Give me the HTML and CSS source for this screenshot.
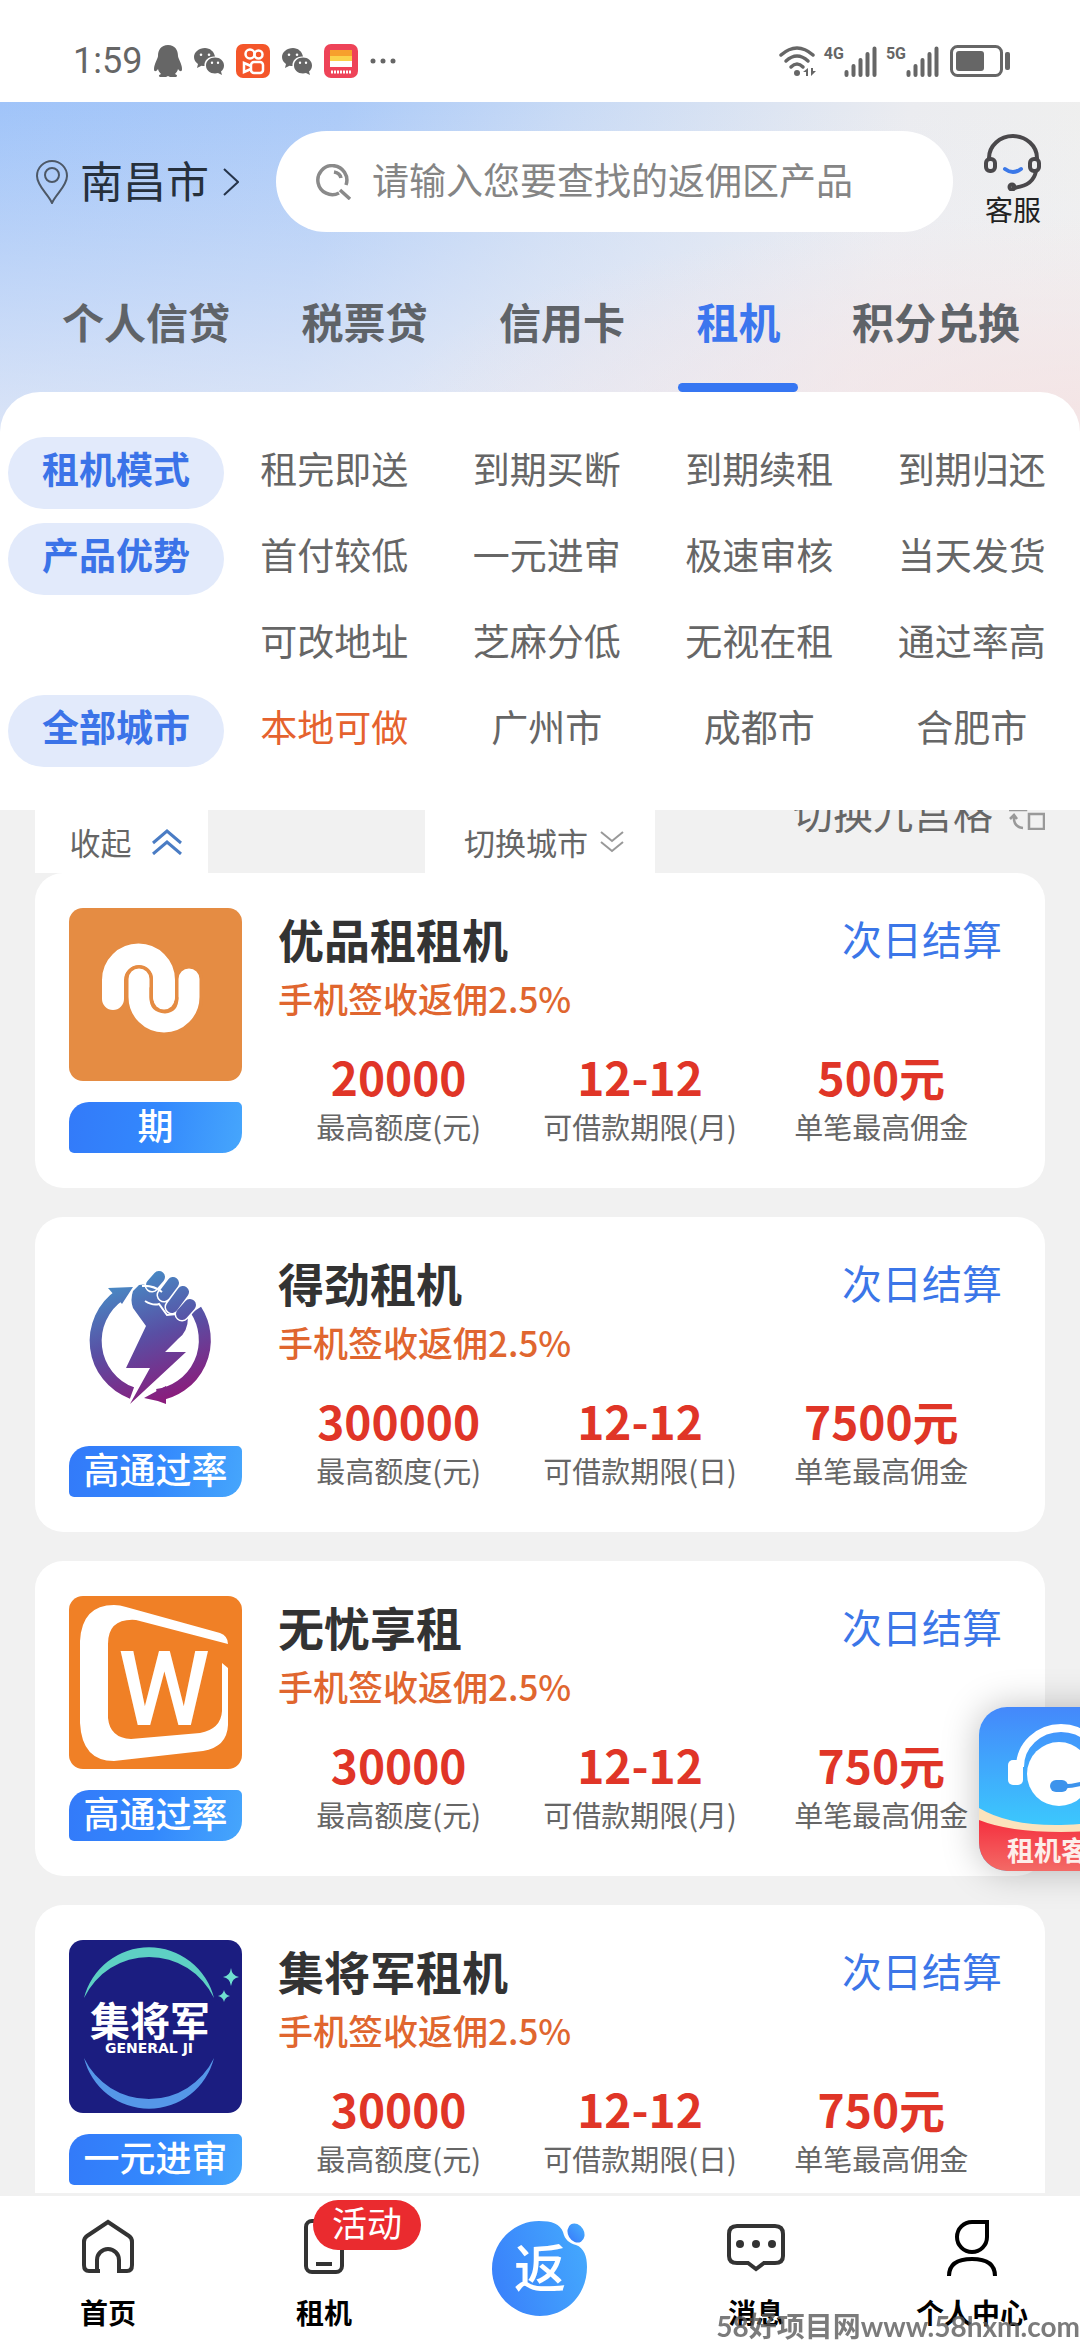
FILE: index.html
```html
<!DOCTYPE html>
<html lang="zh-CN">
<head>
    <meta charset="UTF-8">
    <meta name="viewport" content="width=device-width, initial-scale=1.0">
    <link rel="stylesheet" href="styles.css">
    <title>租机</title>
</head>
<body>

    <!-- shared symbols -->
    <svg class="defs" width="0" height="0" aria-hidden="true">
        <symbol id="wechat" viewBox="0 0 30 27">
            <path fill="#666" fill-rule="evenodd" d="M11 0C5 0 0 4 0 9c0 3 1.500 5.300 4 7l-1 4 4.500-2.300c1 .2 2 .3 3 .3C10 12 15 8 21 8.500 20 3.500 16 0 11 0zM7 5.500a1.300 1.300 0 1 1 0 2.600 1.300 1.300 0 0 1 0-2.600zm8 0a1.300 1.300 0 1 1 0 2.600 1.300 1.300 0 0 1 0-2.600z"/>
            <path fill="#666" fill-rule="evenodd" d="M21 9.500c-5 0-9 3.500-9 8s4 8 9 8c1 0 2-.2 3-.5l4 2-1-3.500c2-1.500 3-3.600 3-6 0-4.500-4-8-9-8zm-3 4a1.200 1.200 0 1 1 0 2.400 1.200 1.200 0 0 1 0-2.400zm6 0a1.200 1.200 0 1 1 0 2.400 1.200 1.200 0 0 1 0-2.400z"/>
        </symbol>
        <symbol id="signal" viewBox="0 0 34 31">
            <path d="M2.500 29v-3M9.500 29v-9M16.500 29V14M23.500 29V8M30.500 29V2.500" stroke="#666" stroke-width="4" stroke-linecap="round"/>
        </symbol>
    </svg>

    <div class="app">
        <div class="status-bar">
            <div class="status-left">
                <span class="time">1:59</span>
                <svg width="28" height="32" viewBox="0 0 28 32"><path fill="#666" d="M14 0c7 0 10 5 10 11 0 2 4 8 4 13 0 3-2 3-4 0-.5 2-1.500 3.500-3 5 3 1 2.500 3 0 3h-5l-2-1-2 1H7c-2.500 0-3-2 0-3-1.500-1.500-2.500-3-3-5-2 3-4 3-4 0 0-5 4-11 4-13C4 5 7 0 14 0z"/></svg>
                <svg width="30" height="27"><use href="#wechat"/></svg>
                <svg width="34" height="34" viewBox="0 0 34 34"><rect width="34" height="34" rx="7" fill="#f4562a"/><g fill="none" stroke="#fff" stroke-width="2.500"><circle cx="14" cy="10" r="4.500"/><circle cx="22.500" cy="10.500" r="4"/><rect x="15" y="18" width="12" height="11" rx="3"/><path d="M15 22l-7-3v9l7-3"/></g></svg>
                <svg width="30" height="27"><use href="#wechat"/></svg>
                <svg width="34" height="34" viewBox="0 0 34 34"><rect width="34" height="34" rx="7" fill="#ee4358"/><path fill="#f7a02c" d="M6 6h22v6H6z"/><path fill="#fbd24a" d="M6 12h22v5H6z"/><path fill="#fff" d="M6 17h22v6H6z"/><path d="M7 28h20" stroke="#fff" stroke-width="3" stroke-dasharray="2 1"/></svg>
                <svg width="26" height="6" viewBox="0 0 26 6" fill="#666"><circle cx="3" cy="3" r="2.500"/><circle cx="13" cy="3" r="2.500"/><circle cx="23" cy="3" r="2.500"/></svg>
            </div>
            <div class="status-right">
                <svg width="37" height="31" viewBox="0 0 37 31"><g fill="none" stroke="#666" stroke-width="3.500" stroke-linecap="round"><path d="M2 9Q18 -5 34 9"/><path d="M7 15Q18 5 29 15"/><path d="M12 21Q18 15 24 21"/></g><circle cx="18" cy="27" r="3" fill="#666"/><path fill="#666" d="M29 22v8h-2v-4h-3zM32 22v8l5-5h-3v-3z"/></svg>
                <span class="net">4G</span>
                <svg width="34" height="31"><use href="#signal"/></svg>
                <span class="net">5G</span>
                <svg width="34" height="31"><use href="#signal"/></svg>
                <svg class="battery" width="60" height="32" viewBox="0 0 60 32"><rect x="1.500" y="1.500" width="50" height="29" rx="6" fill="none" stroke="#666" stroke-width="3"/><rect x="6" y="6" width="28" height="20" rx="3" fill="#666"/><rect x="55" y="7" width="5" height="18" rx="2" fill="#666"/></svg>
            </div>
        </div>

        <div class="top">
            <header>
                <button type="button" class="city">
                    <svg width="32" height="44" viewBox="0 0 32 44" fill="none" stroke="#4d5866" stroke-width="2"><path d="M16 43C12 34 1 26 1 16a15 15 0 0 1 30 0c0 10-11 18-15 27z"/><circle cx="16" cy="15" r="7"/></svg>
                    <span>南昌市</span>
                    <svg width="16" height="28" viewBox="0 0 16 28" fill="none" stroke="#26344a" stroke-width="2"><path d="M1 1l14 13L1 27"/></svg>
                </button>
                <label class="search">
                    <svg width="36" height="36" viewBox="0 0 36 36" fill="none" stroke="#8a8a8a" stroke-width="3.500"><path d="M23 29A14.500 14.500 0 1 1 30 21M24 26l10 9M18 8q6 1 7 6"/></svg>
                    <input type="text" placeholder="请输入您要查找的返佣区产品" aria-label="搜索产品">
                </label>
                <button type="button" class="service">
                    <svg width="58" height="58" viewBox="0 0 58 58" fill="none" stroke="#4a484b" stroke-width="4"><path d="M5 27V25a24 22 0 0 1 48 0v2"/><rect x="2" y="26" width="9" height="12" rx="4"/><rect x="46" y="26" width="9" height="12" rx="4"/><path d="M52 38C50 49 42 54 28 55"/><circle cx="28" cy="54" r="2.500"/><path d="M21 36q8 6 16 0" stroke="#3b78e8" stroke-linecap="round"/></svg>
                    <span>客服</span>
                </button>
            </header>

            <nav class="tabs">
                <a href="#">个人信贷</a>
                <a href="#">税票贷</a>
                <a href="#">信用卡</a>
                <a href="#" class="active">租机</a>
                <a href="#">积分兑换</a>
            </nav>

            <div class="filters">
                <button type="button" class="pill">租机模式</button>
                <button type="button">租完即送</button>
                <button type="button">到期买断</button>
                <button type="button">到期续租</button>
                <button type="button">到期归还</button>

                <button type="button" class="pill">产品优势</button>
                <button type="button">首付较低</button>
                <button type="button">一元进审</button>
                <button type="button">极速审核</button>
                <button type="button">当天发货</button>

                <button type="button" class="second-row">可改地址</button>
                <button type="button">芝麻分低</button>
                <button type="button">无视在租</button>
                <button type="button">通过率高</button>

                <button type="button" class="pill">全部城市</button>
                <button type="button" class="local">本地可做</button>
                <button type="button">广州市</button>
                <button type="button">成都市</button>
                <button type="button">合肥市</button>
            </div>
        </div>

        <main>
            <div class="toolbar">
                <button type="button" class="fold">收起
                    <svg width="30" height="26" viewBox="0 0 30 26" fill="none" stroke="#4a7cc4" stroke-width="3"><path d="M1 14L15 2l14 12M1 25l14-12 14 12"/></svg>
                </button>
                <button type="button" class="change-city">切换城市
                    <svg width="24" height="22" viewBox="0 0 24 22" fill="none" stroke="#999" stroke-width="2"><path d="M1 1l11 9L23 1M1 11l11 9 11-9"/></svg>
                </button>
                <button type="button" class="grid-view">切换九宫格
                    <svg width="36" height="36" viewBox="0 0 36 36" fill="none" stroke="#999" stroke-width="2.500"><path d="M1 1h16v15H1zM20 20h15v15H20zM5 22q-1 11 9 12M1 25l4-4 3 4"/></svg>
                </button>
            </div>

            <section class="card">
                <div class="brand">
                    <svg class="logo" viewBox="0 0 173 173">
                        <rect width="173" height="173" fill="#e58c43"/>
                        <g fill="none" stroke-linecap="round">
                            <path d="M44 91V72a25 25 0 0 1 51 0v19" stroke="#fff" stroke-width="22"/>
                            <path d="M70 71v18a25 25 0 0 0 50 0V71" stroke="#e58c43" stroke-width="28"/>
                            <path d="M95 72v19" stroke="#fff" stroke-width="21"/>
                            <path d="M70 71v18a25 25 0 0 0 50 0V71" stroke="#fff" stroke-width="21"/>
                            <path d="M82 80v10q0 13 14 14 12-1 12-14" stroke="#e58c43" stroke-width="3"/>
                        </g>
                    </svg>
                    <span class="tag">期</span>
                </div>
                <div class="info">
                    <div class="title-row"><h2>优品租租机</h2><span class="settle">次日结算</span></div>
                    <p class="rebate">手机签收返佣2.5%</p>
                    <div class="stats">
                        <div><b>20000</b><span>最高额度(元)</span></div>
                        <div><b>12-12</b><span>可借款期限(月)</span></div>
                        <div><b>500元</b><span>单笔最高佣金</span></div>
                    </div>
                </div>
            </section>

            <section class="card">
                <div class="brand">
                    <svg class="logo" viewBox="0 0 173 173">
                        <defs>
                            <linearGradient id="fist" gradientUnits="userSpaceOnUse" x1="60" y1="20" x2="105" y2="145">
                                <stop offset="0" stop-color="#4690c8"/>
                                <stop offset=".5" stop-color="#594fa4"/>
                                <stop offset="1" stop-color="#8a1c7c"/>
                            </linearGradient>
                        </defs>
                        <g fill="none" stroke="url(#fist)" stroke-width="12">
                            <path d="M51 43A55.500 55.500 0 0 0 63 141"/>
                            <path d="M127 58A55.500 55.500 0 0 1 88 143"/>
                        </g>
                        <g fill="url(#fist)">
                            <path d="M39 36l25-1-11 17zM75 146l22-12v18q-10-4-22-6z"/>
                            <path d="M77 74L64 56q-3-8 0-17l6-6q10-2 24 6l4 15 14 8 7 3q0 15-10 22L96 100h21l-56 52 20-36H57z"/>
                        </g>
                        <path d="M76 49q8 5 14 3l8 11 10-1 4 6" fill="none" stroke="#fff" stroke-width="2"/>
                        <g stroke="#fff" stroke-width="15" stroke-linecap="round"><path d="M90 25l-7 8M104 31l-9 12M114 40l-11 15M121 53l-8 9"/></g>
                        <g stroke="url(#fist)" stroke-width="12" stroke-linecap="round"><path d="M90 25l-7 8M104 31l-9 12M114 40l-11 15M121 53l-8 9"/></g>
                        <path d="M73 34q11-1 20 6" fill="none" stroke="#fff" stroke-width="2"/>
                    </svg>
                    <span class="tag">高通过率</span>
                </div>
                <div class="info">
                    <div class="title-row"><h2>得劲租机</h2><span class="settle">次日结算</span></div>
                    <p class="rebate">手机签收返佣2.5%</p>
                    <div class="stats">
                        <div><b>300000</b><span>最高额度(元)</span></div>
                        <div><b>12-12</b><span>可借款期限(日)</span></div>
                        <div><b>7500元</b><span>单笔最高佣金</span></div>
                    </div>
                </div>
            </section>

            <section class="card">
                <div class="brand">
                    <svg class="logo" viewBox="0 0 173 173">
                        <rect width="173" height="173" fill="#f08026"/>
                        <path fill="#fff" d="M11 45Q13 9 45 9q6 0 12 2l94 26q8 3 8 11L67 24Q39 22 39 48v74q2 20 23 21l69-6q21-4 22-22V67l6 5v57q-1 22-25 26l-89 10Q13 165 11 127z"/>
                        <text class="logo-w" x="95" y="129">W</text>
                    </svg>
                    <span class="tag">高通过率</span>
                </div>
                <div class="info">
                    <div class="title-row"><h2>无忧享租</h2><span class="settle">次日结算</span></div>
                    <p class="rebate">手机签收返佣2.5%</p>
                    <div class="stats">
                        <div><b>30000</b><span>最高额度(元)</span></div>
                        <div><b>12-12</b><span>可借款期限(月)</span></div>
                        <div><b>750元</b><span>单笔最高佣金</span></div>
                    </div>
                </div>
            </section>

            <section class="card">
                <div class="brand">
                    <svg class="logo" viewBox="0 0 173 173">
                        <rect width="173" height="173" fill="#1b1d80"/>
                        <path fill="#5ed0c4" d="M15 58A67 67 0 0 1 145 58A72 72 0 0 0 15 58z"/>
                        <path fill="#5597e8" d="M15 118A67 67 0 0 0 145 118A72 72 0 0 1 15 118z"/>
                        <path fill="#6fe0d0" d="M162 28q1 8 8 9-7 1-8 9-1-8-8-9 7-1 8-9zM155 50q1 5 6 6-5 1-6 6-1-5-6-6 5-1 6-6z"/>
                        <text class="logo-cn" x="81" y="96">集将军</text>
                        <text class="logo-en" x="80" y="113">GENERAL JI</text>
                    </svg>
                    <span class="tag">一元进审</span>
                </div>
                <div class="info">
                    <div class="title-row"><h2>集将军租机</h2><span class="settle">次日结算</span></div>
                    <p class="rebate">手机签收返佣2.5%</p>
                    <div class="stats">
                        <div><b>30000</b><span>最高额度(元)</span></div>
                        <div><b>12-12</b><span>可借款期限(日)</span></div>
                        <div><b>750元</b><span>单笔最高佣金</span></div>
                    </div>
                </div>
            </section>
        </main>

        <nav class="bottom-nav">
            <a href="#">
                <svg width="54" height="60" viewBox="0 0 54 60" fill="none" stroke="#333" stroke-width="4"><path d="M19 55H8q-5 0-5-6V26q0-4 3-6L27 6l21 14q3 2 3 6v23q0 6-5 6H38V44a11 11 0 0 0-22 0v11z"/></svg>
                <span>首页</span>
            </a>
            <a href="#">
                <svg width="40" height="60" viewBox="0 0 40 60" fill="none" stroke="#333" stroke-width="4"><rect x="2" y="5" width="36" height="51" rx="6"/><path d="M12 48h16"/></svg>
                <span>租机</span>
                <em class="badge">活动</em>
            </a>
            <a href="#" class="center" aria-label="返佣">
                <svg width="96" height="96" viewBox="0 0 96 96">
                    <defs>
                        <linearGradient id="fan" x1="0" y1="0.600" x2="1" y2="0.300">
                            <stop offset="0" stop-color="#3a82fb"/>
                            <stop offset="1" stop-color="#44a8fd"/>
                        </linearGradient>
                    </defs>
                    <path fill="url(#fan)" d="M47 0C60 0 68 3 71 11c2 8 6 11 13 13 8 3 11 11 11 22 0 28-21 49-47 49S0 74 0 48 21 0 47 0z"/>
                    <ellipse cx="84" cy="12" rx="8" ry="10" fill="url(#fan)" transform="rotate(-30 84 12)"/>
                    <text class="fan-text" x="48" y="67">返</text>
                </svg>
            </a>
            <a href="#">
                <svg width="58" height="60" viewBox="0 0 58 60" fill="none" stroke="#333" stroke-width="4"><path d="M10 10h38q8 0 8 8v22q0 7-8 7H37l-8 6-8-6H10q-8 0-8-7V18q0-8 8-8z"/><g fill="#333" stroke="none"><circle cx="13" cy="28" r="4"/><circle cx="29" cy="28" r="4"/><circle cx="45" cy="28" r="4"/></g></svg>
                <span>消息</span>
            </a>
            <a href="#">
                <svg width="52" height="60" viewBox="0 0 52 60" fill="none" stroke="#000" stroke-width="4"><path d="M26 6h15v15A15 15 0 1 1 26 6z"/><path d="M3 60Q3 43 26 43t23 17"/></svg>
                <span>个人中心</span>
            </a>
        </nav>
    </div>

    <button type="button" class="float-service" aria-label="租机客服">
        <svg width="164" height="164" viewBox="0 0 164 164">
            <defs>
                <linearGradient id="sky" x1="0" y1="0" x2="0" y2="1">
                    <stop offset="0" stop-color="#4488fb"/>
                    <stop offset=".7" stop-color="#3cc6fd"/>
                </linearGradient>
                <linearGradient id="red" x1="0" y1="0" x2="0" y2="1">
                    <stop offset="0" stop-color="#f5303f"/>
                    <stop offset="1" stop-color="#f36a66"/>
                </linearGradient>
            </defs>
            <rect width="164" height="164" fill="url(#sky)"/>
            <path fill="#fbe3bd" d="M0 101q30 18 82 17t82-17v30H0z"/>
            <path fill="url(#red)" d="M0 113q30 12 82 12t82-12v51H0z"/>
            <path d="M41 60A41 39 0 0 1 123 60" fill="none" stroke="#fff" stroke-width="8"/>
            <rect x="29" y="53" width="15" height="25" rx="5" fill="#fff"/>
            <rect x="120" y="53" width="15" height="25" rx="5" fill="#fff"/>
            <circle cx="80" cy="67" r="32" fill="#fff"/>
            <path d="M78 79q20 2 38-8" fill="none" stroke="#3d93ec" stroke-width="4"/>
            <rect x="71" y="73" width="18" height="12" rx="6" fill="#3d93ec"/>
            <text class="float-text" x="82" y="154">租机客服</text>
        </svg>
    </button>

    <div class="watermark">58好项目网www.58hxm.com</div>

</body>
</html>
```
FILE: styles.css
```css
* {
    box-sizing: border-box;
}

body {
    margin: 0;
    background-color: #f1f1f1;
    font-family: "Noto Sans CJK SC", sans-serif;
    color: #333;
}

button {
    padding: 0;
    border: none;
    background: none;
    font-family: inherit;
    color: inherit;
    cursor: pointer;
}

a {
    color: inherit;
    text-decoration: none;
}

svg {
    display: block;
    flex-shrink: 0;
}

.defs {
    position: absolute;
}

.app {
    display: flex;
    flex-direction: column;
    height: 100vh;
}

/* status bar */
.status-bar {
    display: flex;
    flex-shrink: 0;
    justify-content: space-between;
    align-items: center;
    height: 102px;
    padding: 20px 70px 0 73px;
    background-color: #fff;
    color: #666;
}

.status-left,
.status-right {
    display: flex;
    align-items: center;
}

.status-left {
    gap: 12px;
}

.time {
    font-family: Roboto, sans-serif;
    font-size: 36px;
    line-height: 40px;
}

.net {
    align-self: flex-start;
    margin-left: 8px;
    font-family: Roboto, sans-serif;
    font-size: 16px;
    font-weight: bold;
    line-height: 18px;
}

.battery {
    margin-left: 10px;
}

/* header */
.top {
    flex-shrink: 0;
    background-image:
        radial-gradient(ellipse at 100% 90%, rgba(245, 226, 226, 0.8), rgba(245, 226, 226, 0) 45%),
        linear-gradient(to bottom, rgba(240, 240, 246, 0), rgba(240, 240, 246, 0.75)),
        linear-gradient(100deg, #a0c4f9 0%, #abcaf8 30%, #c8daf5 50%, #ebecf0 80%, #f0f0ee 100%);
    background-size: 100% 340px;
    background-repeat: no-repeat;
}

header {
    display: flex;
    align-items: center;
    padding: 29px 38px 0 36px;
}

.city {
    display: flex;
    align-items: center;
    gap: 12px;
    width: 240px;
    font-size: 43px;
    line-height: 60px;
    color: #26303c;
}

.city span {
    margin-right: 2px;
    padding-bottom: 6px;
}

.search {
    display: flex;
    flex: 1;
    align-items: center;
    gap: 20px;
    height: 101px;
    padding: 0 40px;
    border-radius: 51px;
    background-color: #fff;
}

.search input {
    flex: 1;
    min-width: 0;
    padding: 0 0 6px;
    border: none;
    outline: none;
    background: none;
    font-family: inherit;
    font-size: 37px;
    line-height: 56px;
}

.search input::placeholder {
    color: #858585;
    opacity: 1;
}

.service {
    display: flex;
    flex-direction: column;
    align-items: center;
    margin-left: 31px;
    padding-bottom: 4px;
    font-size: 28px;
    line-height: 36px;
    color: #222;
}

.tabs {
    display: flex;
    justify-content: space-between;
    padding: 59px 42px 0 44px;
    font-size: 42px;
    font-weight: bold;
    line-height: 60px;
    color: #5f6368;
}

.tabs a {
    padding: 0 18px;
}

.tabs .active {
    color: #3b76ee;
}

.tabs a::after {
    content: "";
    display: block;
    height: 9px;
    margin: 32px -18px 0;
    border-radius: 5px;
}

.tabs .active::after {
    background-color: #3676f2;
}

/* filters */
.filters {
    display: grid;
    grid-template-columns: 220px repeat(4, 1fr);
    row-gap: 14px;
    padding: 45px 2px 43px 8px;
    border-radius: 40px 40px 0 0;
    background-color: #fff;
}

.filters button {
    height: 72px;
    padding-bottom: 10px;
    font-size: 37px;
    line-height: 62px;
    color: #666;
}

.filters .pill {
    margin-right: 4px;
    border-radius: 36px;
    background-color: #e2eafb;
    font-weight: bold;
    color: #3b73e8;
}

.filters .second-row {
    grid-column: 2;
}

.filters .local {
    color: #e5622e;
}

/* list */
main {
    flex: 1;
    min-height: 0;
    padding: 0 35px;
    overflow: hidden;
}

.toolbar {
    display: flex;
    align-items: flex-start;
    height: 63px;
}

.toolbar button {
    display: flex;
    align-items: center;
    justify-content: center;
    color: #666;
}

.fold,
.change-city {
    height: 63px;
    padding-left: 8px;
    background-color: #fff;
    font-size: 31px;
    line-height: 40px;
}

.fold {
    gap: 20px;
    width: 173px;
}

.change-city {
    gap: 12px;
    width: 230px;
    margin-left: 217px;
}

.grid-view {
    gap: 16px;
    margin-top: -18px;
    margin-left: auto;
    font-size: 40px;
    line-height: 40px;
}

.card {
    display: flex;
    gap: 36px;
    margin-bottom: 29px;
    padding: 35px 43px 35px 34px;
    border-radius: 28px;
    background-color: #fff;
}

.brand {
    width: 173px;
}

.logo {
    width: 173px;
    height: 173px;
    border-radius: 14px;
}

.logo-w {
    fill: #fff;
    font-family: Roboto, sans-serif;
    font-size: 104px;
    font-weight: 500;
    text-anchor: middle;
}

.logo-cn {
    fill: #fff;
    font-size: 40px;
    font-weight: bold;
    text-anchor: middle;
}

.logo-en {
    fill: #fff;
    font-family: "DejaVu Sans", sans-serif;
    font-size: 14px;
    font-weight: bold;
    text-anchor: middle;
}

.tag {
    display: block;
    height: 51px;
    margin-top: 21px;
    border-radius: 20px 5px 20px 5px;
    background-image: linear-gradient(100deg, #337af9, #3388fd 50%, #46a6fc);
    font-size: 36px;
    font-weight: 500;
    line-height: 44px;
    text-align: center;
    color: #fff;
}

.info {
    flex: 1;
}

.title-row {
    display: flex;
    justify-content: space-between;
    line-height: 60px;
}

h2 {
    margin: 0;
    font-size: 46px;
    color: #333;
}

.settle {
    font-size: 40px;
    color: #3b76e8;
}

.rebate {
    margin: 0;
    font-size: 35px;
    font-weight: 500;
    line-height: 60px;
    color: #e0662f;
}

.stats {
    display: grid;
    grid-template-columns: repeat(3, 1fr);
    margin-top: 18px;
    text-align: center;
}

.stats b {
    display: block;
    font-size: 46px;
    line-height: 60px;
    color: #e03527;
}

.stats span {
    display: block;
    font-size: 29px;
    line-height: 40px;
    color: #666;
}

/* bottom navigation */
.bottom-nav {
    display: flex;
    flex-shrink: 0;
    height: 147px;
    border-top: 3px solid #f1f1f1;
    background-color: #fff;
}

.bottom-nav a {
    position: relative;
    display: flex;
    flex: 1;
    flex-direction: column;
    align-items: center;
    padding-top: 20px;
    font-size: 28px;
    font-weight: bold;
    line-height: 34px;
    color: #000;
}

.bottom-nav span {
    margin-top: 19px;
}

.bottom-nav .center {
    padding-top: 25px;
}

.fan-text {
    fill: #fff;
    font-size: 52px;
    font-weight: 500;
    text-anchor: middle;
}

.badge {
    position: absolute;
    top: 4px;
    left: 97px;
    width: 108px;
    height: 50px;
    border-radius: 25px;
    background-color: #ea2b2f;
    font-size: 35px;
    font-style: normal;
    font-weight: normal;
    line-height: 44px;
    text-align: center;
    color: #fff;
}

/* floating button, half hidden at the edge */
.float-service {
    position: fixed;
    right: -63px;
    bottom: 469px;
    border-radius: 28px;
    box-shadow: 0 0 36px rgba(0, 0, 0, 0.25);
}

.float-service svg {
    border-radius: 28px;
}

.float-text {
    fill: #fdeeea;
    font-size: 27px;
    font-weight: bold;
    text-anchor: middle;
}

.watermark {
    position: fixed;
    right: 0;
    bottom: 0;
    font-family: Lato, "Noto Sans CJK SC", sans-serif;
    font-size: 28px;
    font-weight: bold;
    line-height: 28px;
    color: rgba(90, 90, 90, 0.8);
    pointer-events: none;
}
```
